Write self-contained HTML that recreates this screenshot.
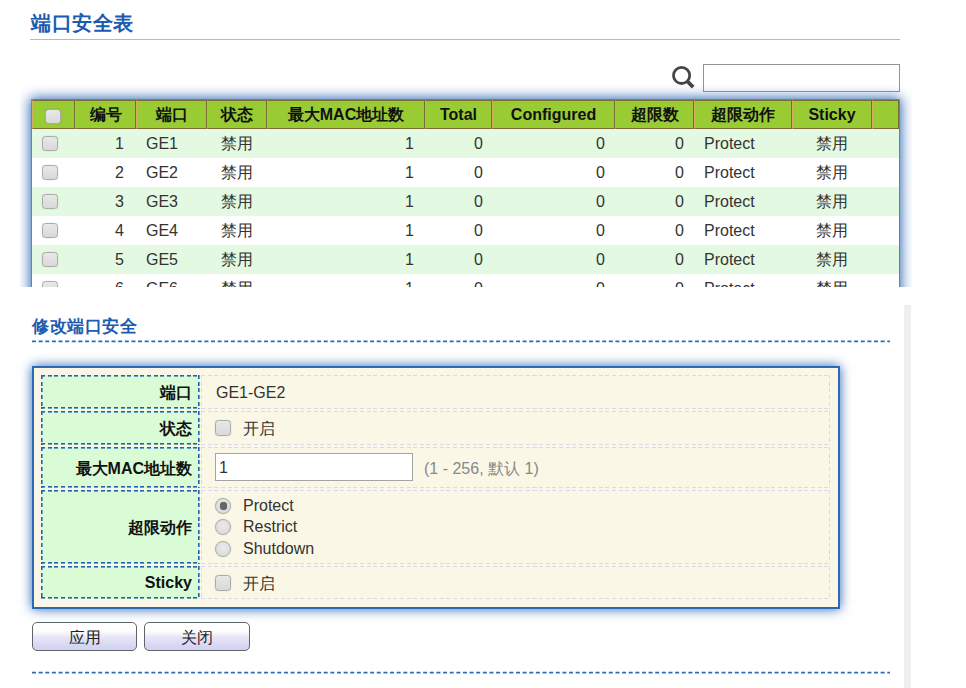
<!DOCTYPE html>
<html><head><meta charset="utf-8">
<style>
*{box-sizing:border-box;margin:0;padding:0}
html,body{width:966px;height:688px;overflow:hidden;background:#fff}
body{position:relative;font-family:"Liberation Sans",sans-serif;font-size:16px;color:#222}
.abs{position:absolute}
.title{left:31px;top:7.5px;font-size:20px;letter-spacing:0.5px;line-height:30px;font-weight:bold;color:#1c5bb0;white-space:nowrap}
.uline{left:30px;top:39px;width:870px;height:1px;background:#a9bbdb}
.search{left:703px;top:64px;width:197px;height:28px;border:1px solid #939393;background:#fff}
.tblwrap{left:20px;top:84px;width:892px;height:203px;overflow:hidden}
.tbl{position:absolute;left:12px;top:16px;width:867px;height:400px;box-shadow:0 0 0 1px rgba(90,120,150,.75),0 0 12px 2px #2a66b4;background:#fff}
.hdr{position:absolute;left:0;top:0;width:867px;height:29px;background:#99cc33}
.hc{position:absolute;top:0;height:29px;border-top:1px solid #786c34;border-bottom:1px solid #786c34;border-right:1px solid #786c34;border-left:1px solid #d6ab66;font-weight:bold;color:#111;text-align:center;line-height:27px;white-space:nowrap}
.row{position:absolute;left:0;width:867px;height:29px}
.row.g{background:#e4f9e2}
.c{position:absolute;top:0;height:29px;line-height:29px;white-space:nowrap;color:#333}
.r{text-align:right}.l{text-align:left}.m{text-align:center}
.cb{position:absolute;width:15.5px;height:15.5px;border:1px solid #ababab;border-radius:3.5px;background:linear-gradient(#e8e8e8,#d9d9d9);box-shadow:0 0 1px rgba(0,0,0,.3)}
.sub{left:32px;top:314px;font-size:17px;letter-spacing:0.5px;line-height:26px;font-weight:bold;color:#1c5bb0;white-space:nowrap}
.dash{height:2px;background:repeating-linear-gradient(90deg,#2264b4 0 4px,transparent 4px 6.63px)}
.strip{left:904px;top:305px;width:7px;height:383px;background:#efefef}
.box{left:32px;top:366px;width:808px;height:243px;border:2px solid #2c6ab6;background:#faf7e6;box-shadow:0 0 11px #2a66b4}
.lab{position:absolute;left:7px;width:159px;border:1px solid transparent;background-origin:border-box !important;background:repeating-linear-gradient(90deg,#2362b0 0 4px,transparent 4px 6.63px) 0 0/100% 1.6px no-repeat,repeating-linear-gradient(90deg,#2362b0 0 4px,transparent 4px 6.63px) 0 100%/100% 1.6px no-repeat,repeating-linear-gradient(180deg,#2362b0 0 4px,transparent 4px 6.63px) 0 0/1.6px 100% no-repeat,repeating-linear-gradient(180deg,#2362b0 0 4px,transparent 4px 6.63px) 100% 0/1.6px 100% no-repeat,#d9fcd6;text-align:right;padding-right:7px;padding-top:1px;font-weight:bold;color:#111;white-space:nowrap}
.val{position:absolute;left:167px;width:629px;border:1px solid transparent;background-origin:border-box !important;background:repeating-linear-gradient(90deg,#d8d8f6 0 4px,transparent 4px 6.63px) 0 0/100% 1px no-repeat,repeating-linear-gradient(90deg,#d8d8f6 0 4px,transparent 4px 6.63px) 0 100%/100% 1px no-repeat,repeating-linear-gradient(180deg,#d8d8f6 0 4px,transparent 4px 6.63px) 0 0/1px 100% no-repeat,repeating-linear-gradient(180deg,#d8d8f6 0 4px,transparent 4px 6.63px) 100% 0/1px 100% no-repeat;white-space:nowrap;padding-top:1px;color:#333}
.btn{position:absolute;top:622px;height:29px;border:1px solid #5e666a;border-radius:5px;background:linear-gradient(#ffffff 0%,#ffffff 28%,#e4e4f8 55%,#d0d0f2 100%);text-align:center;line-height:29px;color:#222}
.radio{position:absolute;width:16px;height:16px;border-radius:50%;border:1px solid #adadad;background:radial-gradient(circle at 50% 40%,#eaeaea,#d8d8d8);box-shadow:0 0 1px rgba(0,0,0,.25)}
</style></head>
<body>
<div class="abs title">端口安全表</div>
<div class="abs uline"></div>

<svg class="abs" style="left:670px;top:63.5px" width="28" height="28" viewBox="0 0 28 28">
  <circle cx="11.6" cy="11.4" r="8.1" fill="none" stroke="#454545" stroke-width="2.8"/>
  <line x1="17" y1="17" x2="23.2" y2="23.2" stroke="#454545" stroke-width="3.8" stroke-linecap="butt"/>
</svg>
<div class="abs search"></div>

<div class="abs tblwrap">
 <div class="tbl">
  <div class="hdr">
   <div class="hc" style="left:0;width:43px"><div class="cb" style="left:12.3px;top:7.5px"></div></div>
   <div class="hc" style="left:43px;width:61px">编号</div>
   <div class="hc" style="left:104px;width:71px">端口</div>
   <div class="hc" style="left:175px;width:60px">状态</div>
   <div class="hc" style="left:235px;width:158px">最大MAC地址数</div>
   <div class="hc" style="left:393px;width:67px">Total</div>
   <div class="hc" style="left:460px;width:123px">Configured</div>
   <div class="hc" style="left:583px;width:79px">超限数</div>
   <div class="hc" style="left:662px;width:98px">超限动作</div>
   <div class="hc" style="left:760px;width:80px">Sticky</div>
   <div class="hc" style="left:840px;width:27px"></div>
  </div>
  <!-- rows -->
  <div class="row g" style="top:29px">
   <div class="cb" style="left:10.3px;top:6.5px"></div>
   <div class="c r" style="left:43px;width:49px">1</div>
   <div class="c l" style="left:114px">GE1</div>
   <div class="c m" style="left:175px;width:60px">禁用</div>
   <div class="c r" style="left:235px;width:147px">1</div>
   <div class="c r" style="left:393px;width:58px">0</div>
   <div class="c r" style="left:460px;width:113px">0</div>
   <div class="c r" style="left:583px;width:69px">0</div>
   <div class="c l" style="left:672px">Protect</div>
   <div class="c m" style="left:760px;width:80px">禁用</div>
  </div>
  <div class="row" style="top:58px">
   <div class="cb" style="left:10.3px;top:6.5px"></div>
   <div class="c r" style="left:43px;width:49px">2</div>
   <div class="c l" style="left:114px">GE2</div>
   <div class="c m" style="left:175px;width:60px">禁用</div>
   <div class="c r" style="left:235px;width:147px">1</div>
   <div class="c r" style="left:393px;width:58px">0</div>
   <div class="c r" style="left:460px;width:113px">0</div>
   <div class="c r" style="left:583px;width:69px">0</div>
   <div class="c l" style="left:672px">Protect</div>
   <div class="c m" style="left:760px;width:80px">禁用</div>
  </div>
  <div class="row g" style="top:87px">
   <div class="cb" style="left:10.3px;top:6.5px"></div>
   <div class="c r" style="left:43px;width:49px">3</div>
   <div class="c l" style="left:114px">GE3</div>
   <div class="c m" style="left:175px;width:60px">禁用</div>
   <div class="c r" style="left:235px;width:147px">1</div>
   <div class="c r" style="left:393px;width:58px">0</div>
   <div class="c r" style="left:460px;width:113px">0</div>
   <div class="c r" style="left:583px;width:69px">0</div>
   <div class="c l" style="left:672px">Protect</div>
   <div class="c m" style="left:760px;width:80px">禁用</div>
  </div>
  <div class="row" style="top:116px">
   <div class="cb" style="left:10.3px;top:6.5px"></div>
   <div class="c r" style="left:43px;width:49px">4</div>
   <div class="c l" style="left:114px">GE4</div>
   <div class="c m" style="left:175px;width:60px">禁用</div>
   <div class="c r" style="left:235px;width:147px">1</div>
   <div class="c r" style="left:393px;width:58px">0</div>
   <div class="c r" style="left:460px;width:113px">0</div>
   <div class="c r" style="left:583px;width:69px">0</div>
   <div class="c l" style="left:672px">Protect</div>
   <div class="c m" style="left:760px;width:80px">禁用</div>
  </div>
  <div class="row g" style="top:145px">
   <div class="cb" style="left:10.3px;top:6.5px"></div>
   <div class="c r" style="left:43px;width:49px">5</div>
   <div class="c l" style="left:114px">GE5</div>
   <div class="c m" style="left:175px;width:60px">禁用</div>
   <div class="c r" style="left:235px;width:147px">1</div>
   <div class="c r" style="left:393px;width:58px">0</div>
   <div class="c r" style="left:460px;width:113px">0</div>
   <div class="c r" style="left:583px;width:69px">0</div>
   <div class="c l" style="left:672px">Protect</div>
   <div class="c m" style="left:760px;width:80px">禁用</div>
  </div>
  <div class="row" style="top:174px">
   <div class="cb" style="left:10.3px;top:6.5px"></div>
   <div class="c r" style="left:43px;width:49px">6</div>
   <div class="c l" style="left:114px">GE6</div>
   <div class="c m" style="left:175px;width:60px">禁用</div>
   <div class="c r" style="left:235px;width:147px">1</div>
   <div class="c r" style="left:393px;width:58px">0</div>
   <div class="c r" style="left:460px;width:113px">0</div>
   <div class="c r" style="left:583px;width:69px">0</div>
   <div class="c l" style="left:672px">Protect</div>
   <div class="c m" style="left:760px;width:80px">禁用</div>
  </div>
 </div>
</div>

<div class="abs sub">修改端口安全</div>
<svg class="abs" style="left:32px;top:339px" width="858" height="5"><line x1="0" y1="2.3" x2="858" y2="2.3" stroke="#2f6cb8" stroke-width="1.7" stroke-dasharray="4 2.63"/></svg>
<div class="abs strip"></div>

<div class="abs box">
 <div class="lab" style="top:7px;height:34px;line-height:32px">端口</div>
 <div class="val" style="top:7px;height:34px;line-height:32px;padding-left:14px">GE1-GE2</div>

 <div class="lab" style="top:43px;height:34px;line-height:32px">状态</div>
 <div class="val" style="top:43px;height:34px;line-height:32px">
   <div class="cb" style="left:13px;top:8px"></div><span style="position:absolute;left:41px">开启</span></div>

 <div class="lab" style="top:79px;height:41px;line-height:39px">最大MAC地址数</div>
 <div class="val" style="top:79px;height:41px;line-height:39px">
   <div style="position:absolute;left:13px;top:5px;width:198px;height:28px;border:1px solid #a4a4a4;background:#fff;line-height:28px;padding-left:3px">1</div>
   <span style="position:absolute;left:222px;color:#888">(1 - 256, 默认 1)</span></div>

 <div class="lab" style="top:122px;height:74px;line-height:72px">超限动作</div>
 <div class="val" style="top:122px;height:74px">
   <div class="radio" style="left:13px;top:7px"><div style="position:absolute;left:3.5px;top:3px;width:7.5px;height:7.5px;border-radius:50%;background:#666;box-shadow:0 0 1px #666"></div></div>
   <div class="radio" style="left:13px;top:28px"></div>
   <div class="radio" style="left:13px;top:50px"></div>
   <span style="position:absolute;left:41px;top:4px;line-height:22px">Protect</span>
   <span style="position:absolute;left:41px;top:25px;line-height:22px">Restrict</span>
   <span style="position:absolute;left:41px;top:46.5px;line-height:22px">Shutdown</span>
 </div>

 <div class="lab" style="top:198px;height:33px;line-height:29px">Sticky</div>
 <div class="val" style="top:198px;height:33px;line-height:31px">
   <div class="cb" style="left:13px;top:8px"></div><span style="position:absolute;left:41px">开启</span></div>
</div>

<div class="btn" style="left:32px;width:105px">应用</div>
<div class="btn" style="left:144px;width:106px">关闭</div>

<svg class="abs" style="left:32px;top:670px" width="858" height="5"><line x1="0" y1="2.7" x2="858" y2="2.7" stroke="#2f6cb8" stroke-width="1.7" stroke-dasharray="4 2.63"/></svg>
</body></html>
